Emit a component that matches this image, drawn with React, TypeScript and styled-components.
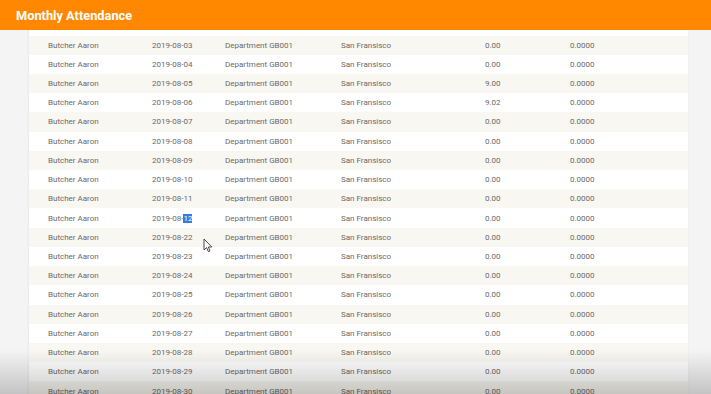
import React from 'react';
import styled, { createGlobalStyle } from 'styled-components';

const GlobalStyle = createGlobalStyle`
   html, body {
      margin: 0;
      padding: 0;
      background: #f4f4f4;
      font-family: Roboto, "Liberation Sans", sans-serif;
      overflow: hidden;
   }
`;

const Page = styled.div`
   position: relative;
   width: 711px;
   height: 394px;
   overflow: hidden;
   background: #f4f4f4;
`;

const Header = styled.div`
   height: 30px;
   background: #ff8800;
   display: flex;
   align-items: center;
   padding-left: 16px;
   color: #ffffff;
   font-size: 12.8px;
   font-weight: 700;
`;

const Body = styled.div`
   display: flex;
   padding: 0 23px 0 28px;
`;

const Panel = styled.div`
   flex: 1;
   background: #ffffff;
   padding-top: 5.5px;
   border-left: 1px solid #ececec;
   box-shadow: 0 0 2px rgba(0, 0, 0, 0.04);
`;

const Row = styled.div<{ $shaded: boolean }>`
   display: grid;
   grid-template-columns: 104px 73px 116px 144px 85px 1fr;
   align-items: center;
   height: 19.23px;
   padding-left: 19px;
   background: ${props => (props.$shaded ? '#f9f7f1' : '#ffffff')};
   font-size: 8px;
   color: #6a6a6a;
   white-space: nowrap;
`;

const Cell = styled.span``;

const Selected = styled.span`
   background: #2f7fe0;
   color: #ffffff;
`;

const Cursor = styled.svg`
   position: absolute;
   left: 203px;
   top: 238px;
`;

const BottomShade = styled.div`
   position: absolute;
   left: 0;
   right: 0;
   bottom: 0;
   height: 44px;
   background: linear-gradient(rgba(0, 0, 0, 0), rgba(0, 0, 0, 0.2));
   pointer-events: none;
`;

const days = ['03', '04', '05', '06', '07', '08', '09', '10', '11', '12', '22', '23', '24', '25', '26', '27', '28', '29', '30'];
const hours: Record<string, string> = { '05': '9.00', '06': '9.02' };

const App: React.FC = () => {
   return (
      <Page>
         <GlobalStyle />
         <Header>Monthly Attendance</Header>
         <Body>
            <Panel>
               {days.map((day, index) => (
                  <Row key={day} $shaded={index % 2 === 0}>
                     <Cell>Butcher Aaron</Cell>
                     <Cell>
                        2019-08-{day === '12' ? <Selected>{day}</Selected> : day}
                     </Cell>
                     <Cell>Department GB001</Cell>
                     <Cell>San Fransisco</Cell>
                     <Cell>{hours[day] || '0.00'}</Cell>
                     <Cell>0.0000</Cell>
                  </Row>
               ))}
            </Panel>
         </Body>
         <Cursor width="10" height="15" viewBox="0 0 10 15">
            <path d="M1 1 L1 12 L3.6 9.6 L5.4 13.6 L7 12.9 L5.3 9 L8.8 9 Z" fill="#ffffff" stroke="#333333" strokeWidth="0.9" strokeLinejoin="round" />
         </Cursor>
         <BottomShade />
      </Page>
   );
};

export default App;
